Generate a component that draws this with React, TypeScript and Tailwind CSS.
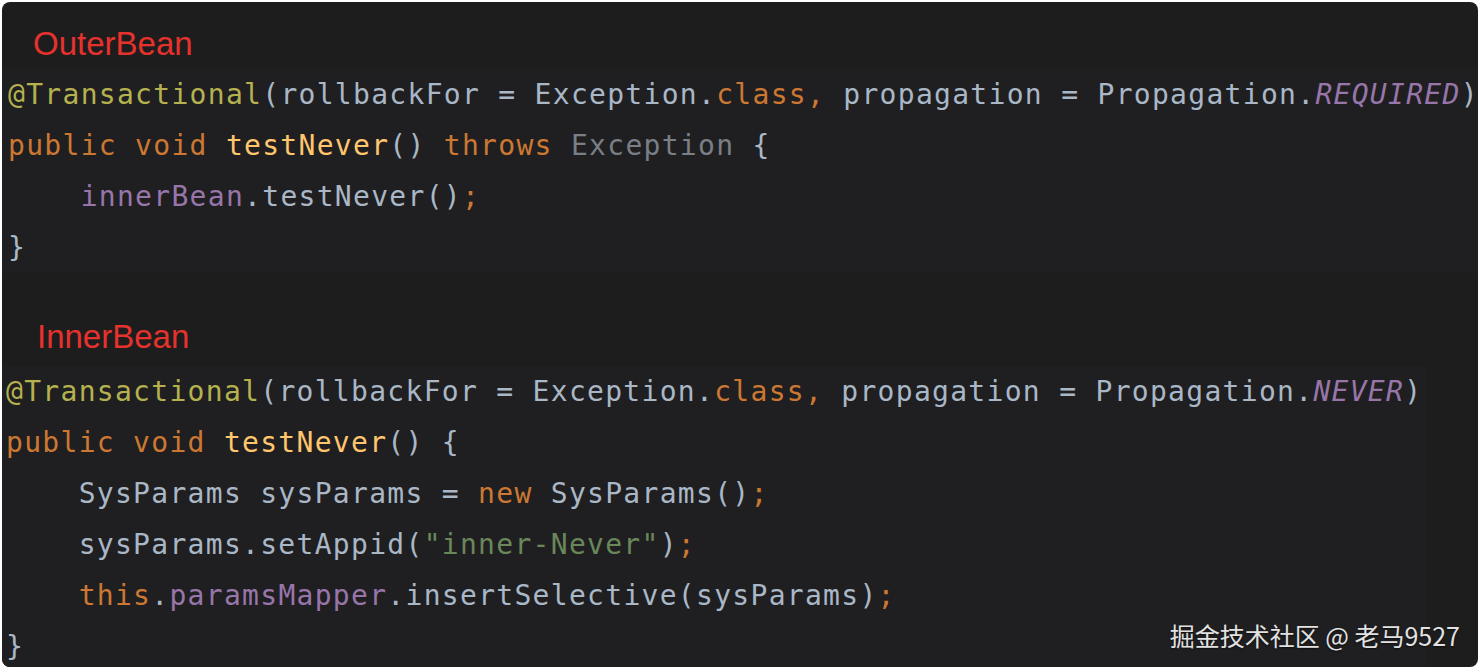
const mono = { fontFamily: '"DejaVu Sans Mono", "Liberation Mono", monospace' };

type Tok = [string, string];

const def = "text-[#a9b7c6]";
const kw = "text-[#cc7832]";
const fn = "text-[#ffc66d]";
const ann = "text-[#b5b14f]";
const purple = "text-[#9876aa]";
const italicPurple = "text-[#9876aa] italic";
const gray = "text-[#7a7e85]";
const str = "text-[#6a8759]";

const outer: Tok[][] = [
  [
    ["@Transactional", ann],
    ["(rollbackFor = Exception.", def],
    ["class,", kw],
    [" propagation = Propagation.", def],
    ["REQUIRED", italicPurple],
    [")", def],
  ],
  [
    ["public void ", kw],
    ["testNever", fn],
    ["() ", def],
    ["throws ", kw],
    ["Exception", gray],
    [" {", def],
  ],
  [
    ["    ", def],
    ["innerBean", purple],
    [".testNever()", def],
    [";", kw],
  ],
  [["}", def]],
];

const inner: Tok[][] = [
  [
    ["@Transactional", ann],
    ["(rollbackFor = Exception.", def],
    ["class,", kw],
    [" propagation = Propagation.", def],
    ["NEVER", italicPurple],
    [")", def],
  ],
  [
    ["public void ", kw],
    ["testNever", fn],
    ["() {", def],
  ],
  [
    ["    SysParams sysParams = ", def],
    ["new", kw],
    [" SysParams()", def],
    [";", kw],
  ],
  [
    ["    sysParams.setAppid(", def],
    ['"inner-Never"', str],
    [")", def],
    [";", kw],
  ],
  [
    ["    ", def],
    ["this", kw],
    [".", def],
    ["paramsMapper", purple],
    [".insertSelective(sysParams)", def],
    [";", kw],
  ],
  [["}", def]],
];

function Code({ lines }: { lines: Tok[][] }) {
  return (
    <div className="flex flex-col text-[28px] tracking-[1.3px]" style={mono}>
      {lines.map((line, i) => (
        <div key={i} className="h-[51px] shrink-0 leading-[51px] whitespace-pre">
          {line.map(([t, c], j) => (
            <span key={j} className={c}>
              {t}
            </span>
          ))}
        </div>
      ))}
    </div>
  );
}

export default function App() {
  return (
    <div className="w-[1482px] h-[670px] bg-white pt-[2px] pl-[2px]">
      <div className="relative w-[1476px] h-[665px] rounded-[8px] bg-[#1d1d1e] overflow-hidden flex flex-col">
        <div
          className="h-[66.5px] shrink-0 pt-[15.5px] pl-[31px] text-[33px] leading-[51px] text-[#e5322d]"
          style={{ fontFamily: '"Liberation Sans", Arial, sans-serif' }}
        >
          OuterBean
        </div>
        <div className="shrink-0 pl-[6px] bg-[#1f1f21]">
          <Code lines={outer} />
        </div>
        <div
          className="mt-[38px] h-[55px] shrink-0 pl-[35px] text-[33px] leading-[51px] text-[#e5322d]"
          style={{ fontFamily: '"Liberation Sans", Arial, sans-serif' }}
        >
          InnerBean
        </div>
        <div className="w-[1425px] shrink-0 pl-[4px] bg-[#1f1f21]">
          <Code lines={inner} />
        </div>
        <div
          className="absolute right-[18px] bottom-[14px] text-[25px] leading-[36px] text-[#e2e2e2] [text-shadow:0_1px_2px_rgba(0,0,0,0.6)]"
          style={{ fontFamily: '"Noto Sans CJK SC", "Noto Sans", sans-serif' }}
        >
          掘金技术社区 @ 老马9527
        </div>
      </div>
    </div>
  );
}
